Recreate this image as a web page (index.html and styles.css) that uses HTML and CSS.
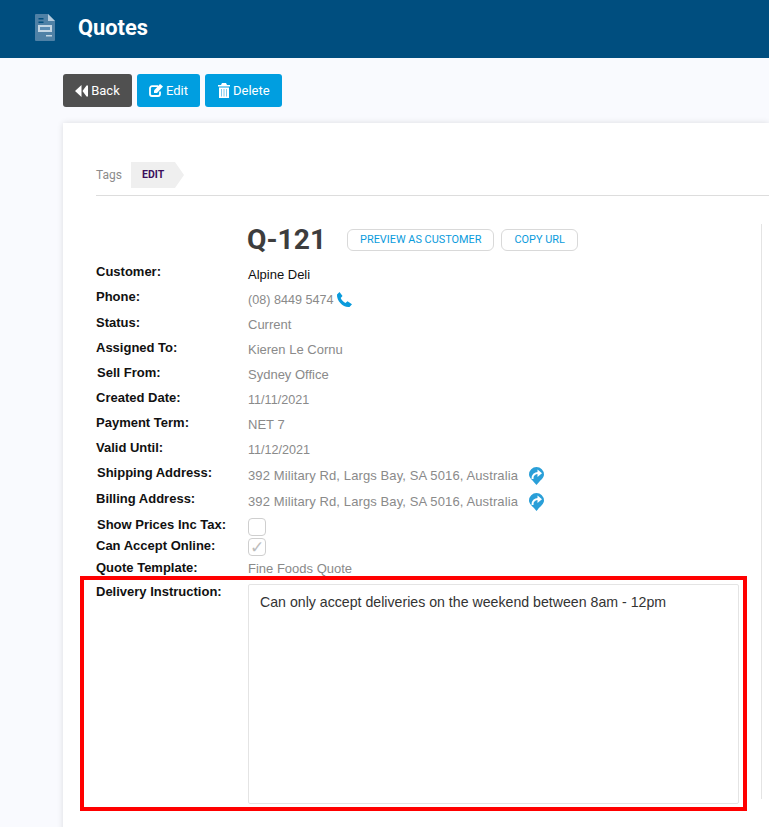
FILE: index.html
```html
<!DOCTYPE html>
<html lang="en">
<head>
<meta charset="utf-8">
<title>Quotes</title>
<link rel="stylesheet" href="styles.css">
</head>
<body>
<header class="topbar">
  <svg class="doc-icon" width="20" height="27" viewBox="0 0 20 27"><path fill="#4f81a6" d="M1 0h12l7 7v19a1 1 0 0 1-1 1H1a1 1 0 0 1-1-1V1a1 1 0 0 1 1-1z"/><path fill="#b4cbdd" d="M13 0l7 7h-7z"/><path fill="#004e7f" d="M3.500 4h5v1.500h-5zM3.500 7.500h5V9h-5z"/><path fill="#c3d6e4" d="M3 11h14v7H3z"/><path fill="#5c8db3" d="M5 13h10v3H5z"/><path fill="#c3d6e4" d="M11 21h6v1.500h-6z"/></svg>
  <h1 class="title">Quotes</h1>
</header>
<main class="content">
  <div class="actions">
    <a class="btn btn-dark"><svg width="13" height="12" viewBox="0 0 13 12"><path fill="#fff" d="M6.500 0v12L0 6zM7.500 6l4-5.500h1.500v11h-1.500z"/></svg>Back</a>
    <a class="btn btn-blue"><svg width="14" height="13" viewBox="0 0 14 13"><path fill="none" stroke="#fff" stroke-width="1.800" d="M9 2.200H3a2 2 0 0 0-2 2V10a2 2 0 0 0 2 2h6a2 2 0 0 0 2-2V7.500"/><path fill="#fff" d="M5 6.500l6-6.500 3 2.500L8 9H5z"/></svg>Edit</a>
    <a class="btn btn-blue"><svg width="12" height="15" viewBox="0 0 12 15"><path fill="#fff" d="M4 0h4l1 2h3v1.500H0V2h3zM1 4.500h10V15H1z"/><path fill="#7cc8ec" d="M3 6h1v7.500H3zM5.500 6h1v7.500h-1zM8 6h1v7.500H8z"/></svg>Delete</a>
  </div>
  <section class="card">
    <div class="tags">
      <span class="tags-label">Tags</span>
      <span class="tag">EDIT</span>
    </div>
    <div class="detail">
      <div class="heading">
        <h2 class="quote-no">Q-121</h2>
        <a class="pill">PREVIEW AS CUSTOMER</a>
        <a class="pill">COPY URL</a>
      </div>
      <div class="row"><span class="label">Customer:</span><span class="value value-dark">Alpine Deli</span></div>
      <div class="row row-phone"><span class="label">Phone:</span><span class="value value-num">(08) 8449 5474<svg class="phone" width="17" height="16" viewBox="0 0 17 16"><path fill="#0a9bdc" d="M1 2.500L3.500 0l3 4-1.800 2c.8 2 2.500 3.800 4.800 5l2-1.800 4.500 3-2.500 2.800C7.500 16 .5 9 1 2.500z"/></svg></span></div>
      <div class="row"><span class="label">Status:</span><span class="value">Current</span></div>
      <div class="row"><span class="label">Assigned To:</span><span class="value">Kieren Le Cornu</span></div>
      <div class="row"><span class="label label-in">Sell From:</span><span class="value">Sydney Office</span></div>
      <div class="row"><span class="label">Created Date:</span><span class="value value-num">11/11/2021</span></div>
      <div class="row"><span class="label">Payment Term:</span><span class="value">NET 7</span></div>
      <div class="row"><span class="label">Valid Until:</span><span class="value value-num">11/12/2021</span></div>
      <div class="row row-addr"><span class="label label-in">Shipping Address:</span><span class="value value-addr">392 Military Rd, Largs Bay, SA 5016, Australia<svg class="pin" width="15" height="18" viewBox="0 0 15 18"><path fill="#2a9fd8" d="M7.500 0A7.500 7.500 0 0 1 15 7.500c0 3.500-4 6-7.500 10.500C4 13.500 0 11 0 7.500A7.500 7.500 0 0 1 7.500 0z"/><path fill="none" stroke="#fff" stroke-width="2" d="M3.500 12C3 8 6 5.800 9.500 6"/><path fill="#fff" d="M8.500 2.500L13 6.200 8.500 10z"/></svg></span></div>
      <div class="row row-addr"><span class="label">Billing Address:</span><span class="value value-addr">392 Military Rd, Largs Bay, SA 5016, Australia<svg class="pin" width="15" height="18" viewBox="0 0 15 18"><path fill="#2a9fd8" d="M7.500 0A7.500 7.500 0 0 1 15 7.500c0 3.500-4 6-7.500 10.500C4 13.500 0 11 0 7.500A7.500 7.500 0 0 1 7.500 0z"/><path fill="none" stroke="#fff" stroke-width="2" d="M3.500 12C3 8 6 5.800 9.500 6"/><path fill="#fff" d="M8.500 2.500L13 6.200 8.500 10z"/></svg></span></div>
      <div class="row row-check"><span class="label label-in">Show Prices Inc Tax:</span><span class="check"></span></div>
      <div class="row row-check2"><span class="label">Can Accept Online:</span><span class="check check-on">✓</span></div>
      <div class="row row-template"><span class="label">Quote Template:</span><span class="value value-tpl">Fine Foods Quote</span></div>
      <div class="row row-note"><span class="label">Delivery Instruction:</span><div class="note">Can only accept deliveries on the weekend between 8am - 12pm</div></div>
    </div>
  </section>
</main>
<div class="highlight"></div>
</body>
</html>
```
FILE: styles.css
```css
* { box-sizing: border-box; }
html, body { margin: 0; height: 827px; overflow: hidden; }
body { background: #f9fafe; font-family: "Liberation Sans", Arial, sans-serif; position: relative; }
.topbar { height: 58px; background: #004e7f; display: flex; align-items: center; padding-left: 35px; }
.doc-icon { flex: none; margin-top: -3px; }
.title { margin: -3px 0 0 23px; font: 700 21.800px Roboto, sans-serif; color: #fff; }
.content { padding: 16px 0 0 63px; }
.actions { display: flex; gap: 5px; }
.btn { height: 33px; display: flex; align-items: center; justify-content: center; gap: 3px; border-radius: 3px; color: #fff; font: 13px Roboto, sans-serif; }
.btn-dark { width: 69px; background: #505050; }
.btn-blue { background: #009ee0; padding: 0 12px; }
.btn-blue + .btn-blue { padding: 0 12px 0 13px; }
.card { margin-top: 16px; height: 720px; background: #fff; box-shadow: 0 0 6px rgba(0,0,0,.12); padding: 39px 0 0 33px; }
.tags { display: flex; align-items: center; height: 34px; border-bottom: 1px solid #ddd; padding-bottom: 7px; }
.tags-label { width: 35px; font: 12px Roboto, sans-serif; color: #8b8b8b; }
.tag { height: 26px; width: 53px; padding-left: 11px; background: #efefef; clip-path: polygon(0 0, 44px 0, 100% 50%, 44px 100%, 0 100%); font: 700 10.500px/25px Roboto, sans-serif; color: #3c0f5c; }
.detail { margin-top: 27px; width: 666px; position: relative; }
.detail::after { content: ""; position: absolute; left: 665px; top: 1px; height: 575px; width: 1px; background: #e4e4e4; }
.heading { display: flex; align-items: center; height: 32px; padding-left: 151px; margin-bottom: 9px; }
.quote-no { margin: 0 21px 0 0; font: 700 28.200px Roboto, sans-serif; color: #3d3d3d; }
.pill { height: 22px; margin-right: 7px; padding: 0 12px; border: 1px solid #d9d9d9; border-radius: 6px; color: #0a9bdc; font: 10.900px/20px Roboto, sans-serif; background: #fff; margin-top: 1px; }
.row { display: flex; height: 25px; align-items: flex-start; }
.row-phone { height: 26px; }
.label { width: 152px; flex: none; font: 700 13px/15px "Liberation Sans", Arial, sans-serif; color: #111; }
.label-in { padding-left: 1px; }
.value { margin-top: 2px; display: flex; align-items: center; font: 13px/15px "Liberation Sans", Arial, sans-serif; color: #8a8a8a; }
.value-num { font-size: 12.600px; margin-top: 3px; }
.value-addr { margin-top: 1px; letter-spacing: .11px; }
.value-tpl { margin-top: 1px; }
.value-dark { color: #111; font-size: 13px; margin-top: 3px; }
.phone { margin-left: 3px; }
.pin { margin-left: 11px; margin-top: 1px; }
.row-addr { height: 26px; }
.row-check { height: 21px; }
.row-check2 { height: 21px; }
.row-template { height: 25px; padding-top: 1px; }
.row-note { height: 220px; }
.check { width: 18px; height: 18px; margin-top: 1px; border: 1px solid #cfcfcf; border-radius: 4px; background: #fff; display: block; color: #bdbdbd; font: 700 17px/16px "DejaVu Sans", sans-serif; text-align: center; }
.row-check2 .check { margin-top: 0; }
.note { width: 491px; height: 220px; padding: 9px 11px; border: 1px solid #e4e4e4; border-radius: 2px; font: 14.170px/17px "Liberation Sans", Arial, sans-serif; color: #333; }
.highlight { position: absolute; left: 80px; top: 576px; width: 667px; height: 235px; border: 4px solid #f00; pointer-events: none; }
```
